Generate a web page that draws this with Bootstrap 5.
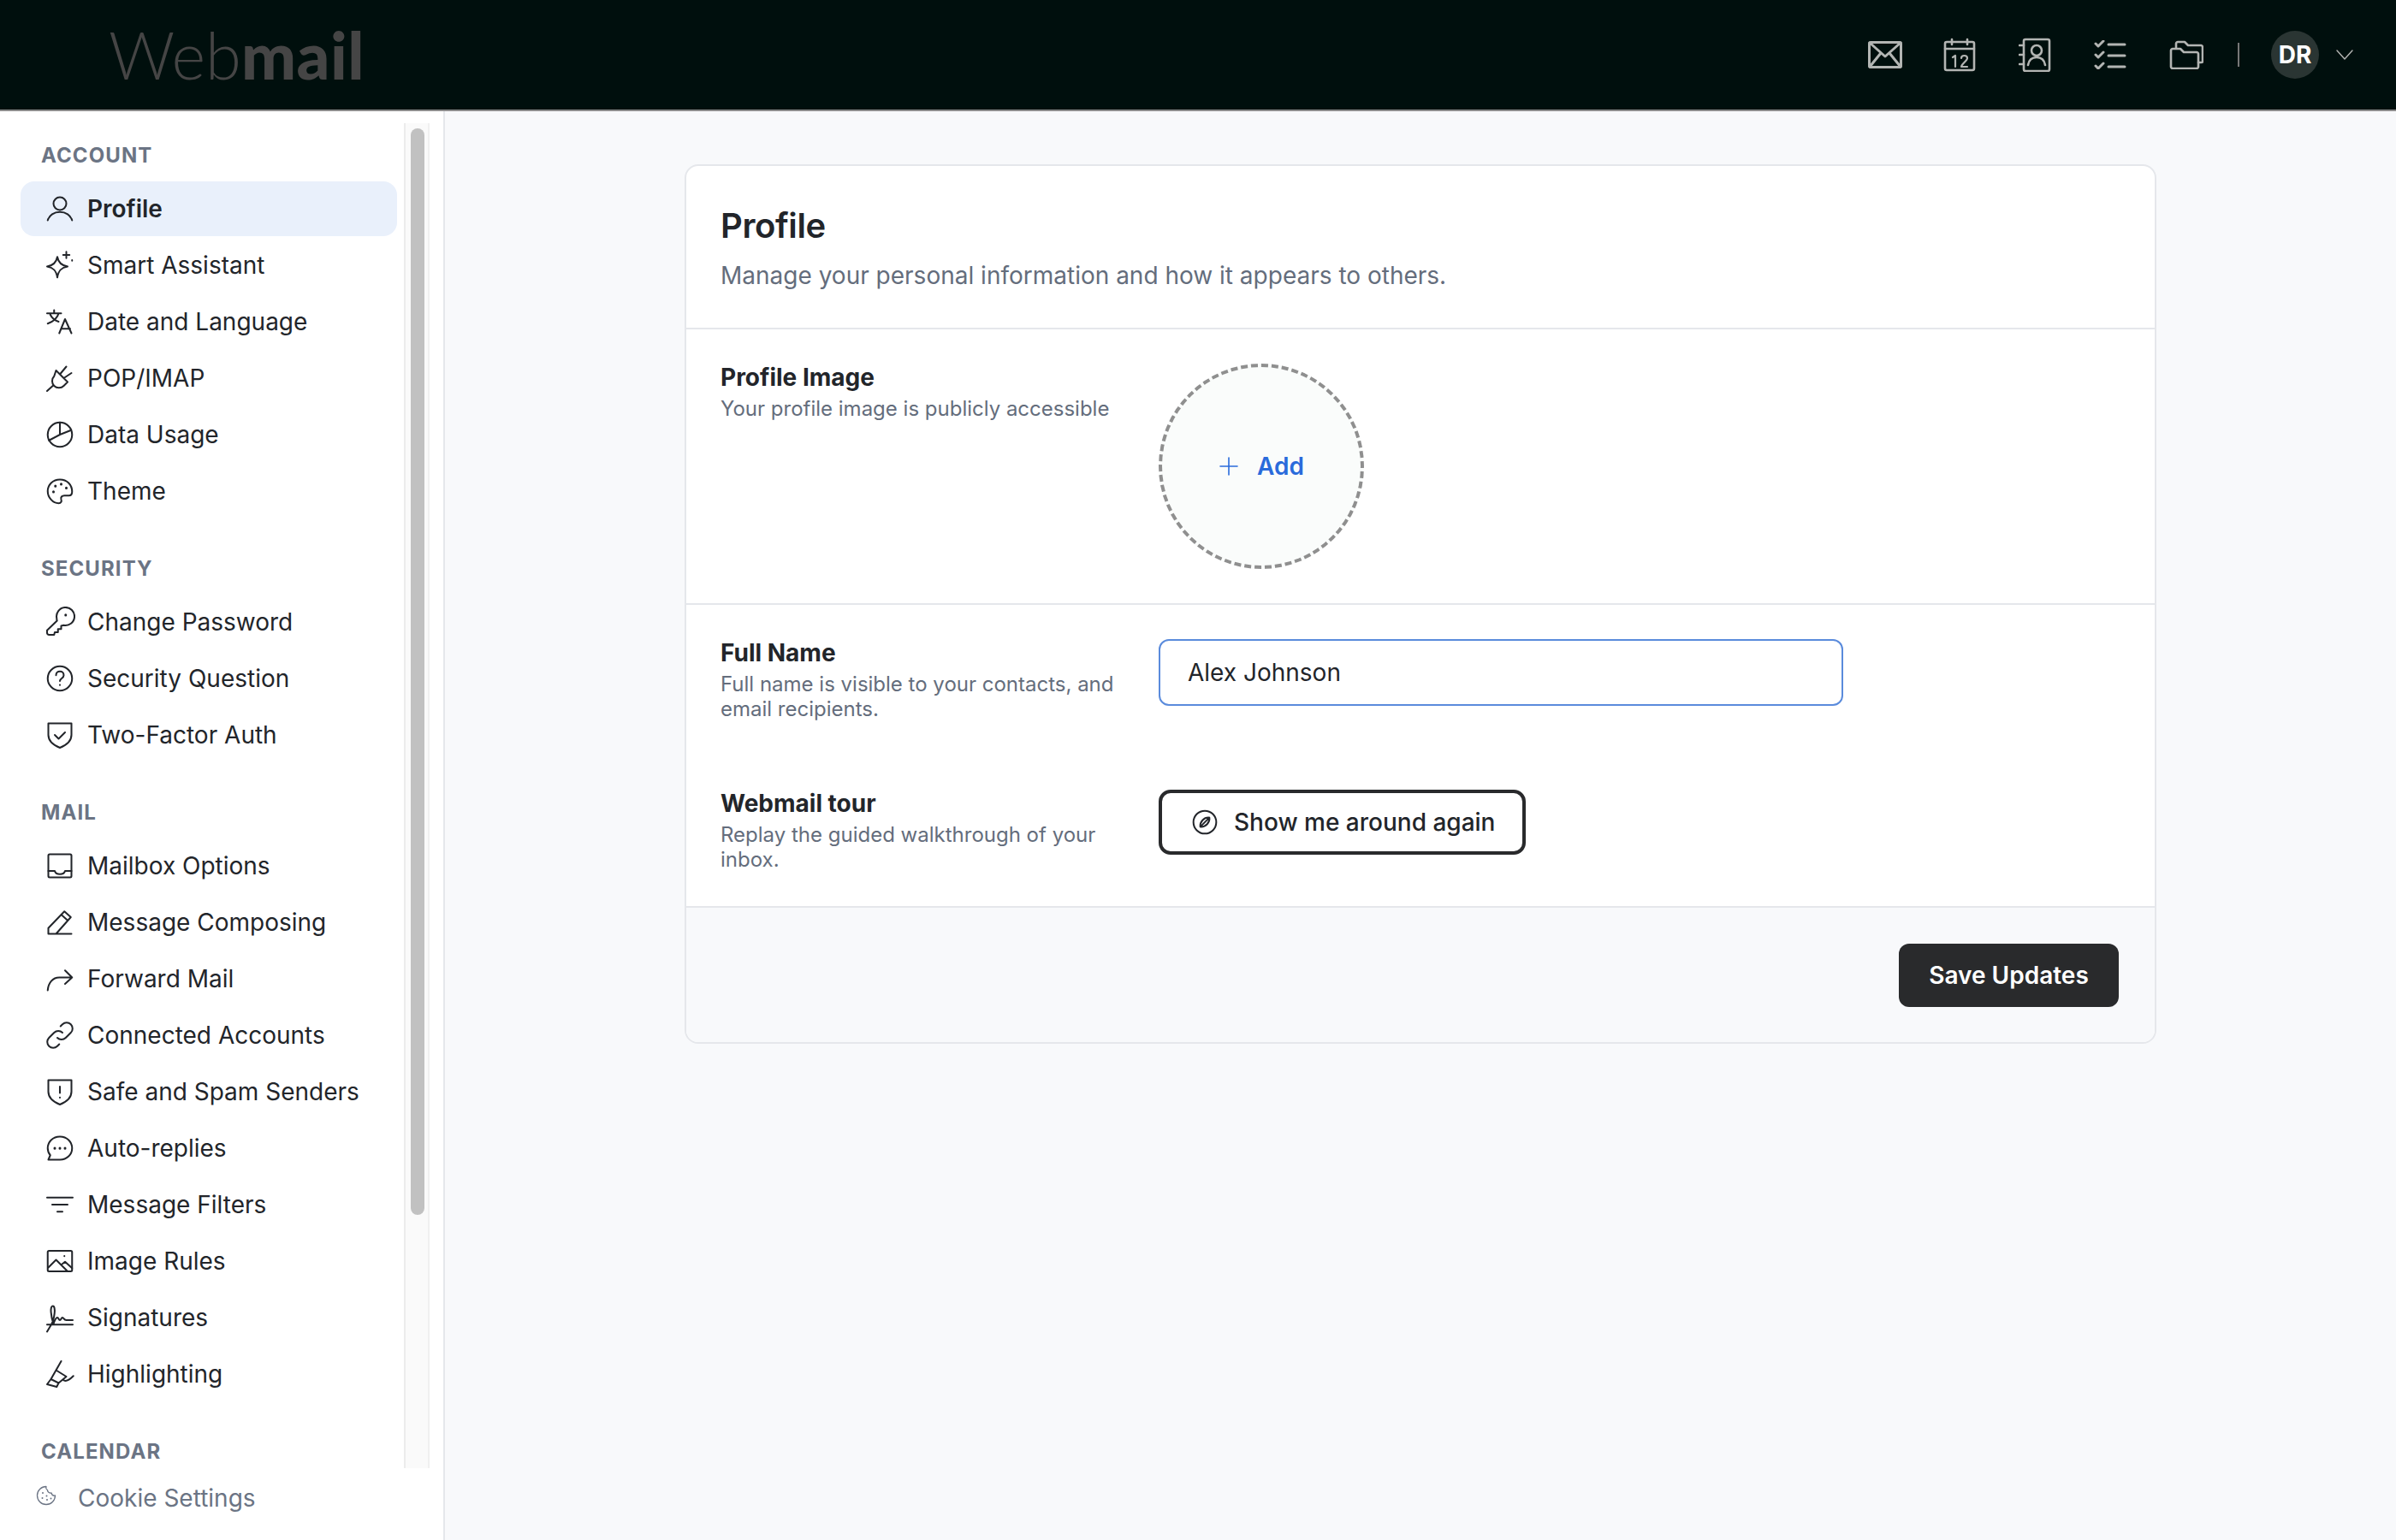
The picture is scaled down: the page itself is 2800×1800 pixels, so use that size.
<!DOCTYPE html>
<html lang="en">
<head>
    <meta charset="UTF-8">
    <title>Webmail - Profile</title>
    <link href="https://cdn.jsdelivr.net/npm/bootstrap@5.3.0/dist/css/bootstrap.min.css" rel="stylesheet">
    <style>
        html, body { height: 100%; margin: 0; overflow: hidden; }
        body { background: #f8f9fb; font-family: Inter, "Liberation Sans", sans-serif; color: #22252a; }
        svg { display: block; flex: none; fill: none; stroke: currentColor; stroke-width: 1.5; stroke-linecap: round; stroke-linejoin: round; }

        .top-bar { height: 130px; background: #000f0d; border-bottom: 2px solid #8b8b8b; padding: 0 50px 0 127px; }
        .logo-text { font-family: Lato, sans-serif; font-size: 76px; line-height: 1; color: #454545; font-weight: 300; }
        .logo-text b { font-weight: 900; letter-spacing: .5px; }
        .top-icons { color: #b3b5b3; }
        .top-icon { margin-right: 50px; }
        .top-icon.mail-ic { margin-right: 48px; margin-left: 2px; }
        .top-sep { width: 2px; height: 28px; background: #777; margin: 0 37px 0 -10px; }
        .avatar-dot { width: 56px; height: 56px; border-radius: 50%; background: #2a3533; color: #fff; font-size: 28px; font-weight: 700; }
        .caret-icon { margin-left: 20px; }

        .page-wrap { height: 1670px; }
        .side-col { width: 520px; background: #fff; border-right: 2px solid #e5e7eb; }
        .side-scroll { height: 1586px; }
        .side-list { width: 472px; padding-top: 36px; overflow: hidden; }
        .side-head { height: 32px; line-height: 32px; margin: 43px 0 14px 48px; font-size: 24px; font-weight: 700; letter-spacing: 1.1px; color: #6b7484; text-transform: uppercase; }
        .side-head.first { margin-top: 0; }
        .side-link { height: 64px; margin: 0 8px 2px 24px; padding-left: 28px; gap: 14px; border-radius: 16px; font-size: 28px; color: #22252a; text-decoration: none; }
        .side-link svg { width: 36px; height: 36px; stroke-width: 1.35; }
        .side-link.active { background: #e9f0fb; font-weight: 600; }
        .track-box { width: 30px; margin-top: 14px; background: #fafafa; border-left: 2px solid #ececec; border-right: 2px solid #f0f0f0; padding: 6px 4px 0 6px; }
        .thumb-box { height: 1270px; background: #c1c1c1; border-radius: 8px; }
        .cookie-row { height: 84px; padding: 0 0 14px 42px; color: #6b7484; font-size: 28px; }
        .cookie-row svg { margin: -6px 25px 0 0; }

        .main-col { padding: 62px 0 0; }
        .profile-card { width: 1720px; height: 1028px; margin: 0 auto; border: 2px solid #e5e7eb; border-radius: 16px; overflow: hidden; background: #fff; }
        .card-top { height: 191px; padding: 46px 40px 0; border-bottom: 2px solid #e5e7eb; }
        .card-top h1 { font-size: 40px; line-height: 48px; font-weight: 600; letter-spacing: -.4px; margin: 0 0 14px; color: #22252a; }
        .card-top p { font-size: 28px; line-height: 40px; margin: 0; color: #646d7c; }
        .block-sec { padding: 40px; border-bottom: 2px solid #e5e7eb; }
        .pic-sec { height: 322px; }
        .form-line { display: flex; gap: 32px; }
        .form-line + .form-line { margin-top: 80px; }
        .label-col { width: 480px; flex: none; }
        .label-col h2 { font-size: 28px; line-height: 32px; font-weight: 700; margin: 0 0 6px; color: #22252a; }
        .label-col p { font-size: 24px; line-height: 29px; margin: 0; color: #646d7c; }
        .add-circle { width: 240px; height: 240px; border: 4px dashed #8f8f8f; border-radius: 50%; background: #fafcfb; color: #2a6bdb; gap: 21px; font-size: 28px; font-weight: 600; }
        .name-input.form-control { width: 800px; height: 78px; border: 2px solid #5a8bdc; border-radius: 12px; font-size: 28px; padding: 0 32px; color: #22252a; box-shadow: none; }
        .tour-btn.btn { height: 76px; border: 4px solid #292a2c; border-radius: 14px; padding: 0 32px 0 34px; gap: 18px; background: #fff; color: #22252a; font-size: 28px; font-weight: 500; }
        .card-end { height: 157px; background: #f8f9fb; padding-right: 42px; }
        .save-btn.btn { height: 74px; width: 257px; background: #292a2c; color: #fff; border: 0; border-radius: 12px; font-size: 28px; font-weight: 600; }
    </style>
</head>
<body>
    <div class="top-bar d-flex align-items-center justify-content-between">
        <div class="logo-text">Web<b>mail</b></div>
        <div class="top-icons d-flex align-items-center">
            <svg class="top-icon mail-ic" width="40" height="32" viewBox="0 0 40 32" style="stroke-width:3"><rect x="1.5" y="1.5" width="37" height="29" rx="1.5"/><path d="M2 2l18 16L38 2M2 30l13-16M38 30L25 14"/></svg>
            <svg class="top-icon" width="38" height="40" viewBox="0 0 38 40" style="stroke-width:2.6"><rect x="2" y="5" width="34" height="33" rx="2"/><path d="M2 13h34M10 2v6M28 2v6"/><path d="M11 23l3-2v13M21 24c0-4 7-4 7 0 0 3-7 7-7 10h7" stroke-width="2.2"/></svg>
            <svg class="top-icon" width="38" height="40" viewBox="0 0 38 40" style="stroke-width:2.6"><rect x="6" y="2" width="30" height="37" rx="2"/><circle cx="21" cy="15" r="6"/><path d="M11 32c1-6 5-9 10-9s9 3 10 9M1 9h5M1 20h5M1 31h5"/></svg>
            <svg class="top-icon" width="38" height="34" viewBox="0 0 38 34" style="stroke-width:3"><path d="M2 4l3 3 6-6M2 17l3 3 6-6M2 30l3 3 6-6M17 5h19M17 18h19M17 31h19"/></svg>
            <svg class="top-icon" width="40" height="34" viewBox="0 0 40 34" style="stroke-width:2.6"><path d="M2 12c0-1 1-2 2-2h9l4 4h15c1 0 2 1 2 2v15c0 1-1 2-2 2H4c-1 0-2-1-2-2z"/><path d="M8 9V4c0-1 1-2 2-2h8l4 4h15c1 0 2 1 2 2v17c0 1-1 1-2 1h-3"/></svg>
            <div class="top-sep"></div>
            <div class="avatar-dot d-flex align-items-center justify-content-center">DR</div>
            <svg class="caret-icon" width="20" height="12" viewBox="0 0 20 12" style="stroke-width:1.4"><path d="M1 1l9 10 9-10"/></svg>
        </div>
    </div>

    <div class="page-wrap d-flex">
        <aside class="side-col d-flex flex-column flex-shrink-0">
            <div class="side-scroll d-flex">
                <nav class="side-list flex-shrink-0">
                    <div class="side-head first">Account</div>
                    <a class="side-link active d-flex align-items-center" href="#"><svg viewBox="0 0 24 24"><circle cx="12" cy="8" r="5"/><path d="M2.5 21c1.2-4 5-6.500 9.500-6.500s8.300 2.500 9.500 6.500"/></svg>Profile</a>
                    <a class="side-link d-flex align-items-center" href="#"><svg viewBox="0 0 24 24"><path d="M10 5.500c.8 4.500 3 6.700 8 7.500-5 .8-7.200 3.200-8 8.500-.8-5.300-3-7.700-8-8.500 5-.8 7.200-3 8-7.500z"/><path d="M17 1.500v5M14.500 4h5M21.500 8v.5" stroke-width="1.3"/></svg>Smart Assistant</a>
                    <a class="side-link d-flex align-items-center" href="#"><svg viewBox="0 0 24 24"><path d="M2 5.500h11M7.500 3v2.500M11 5.500c-1 4-4.500 6.500-8.500 8M4.500 6.500c1.200 2.500 3.500 4.500 6.500 5.500M11.500 21l4.500-11 5 11M13 17.500h7"/></svg>Date and Language</a>
                    <a class="side-link d-flex align-items-center" href="#"><svg viewBox="0 0 24 24"><path d="M2 22l5-4.500M9 6l9 9-3 3c-2 2-5.500 2-7.500 0s-2-5.500 0-7.500zM12 9l5-6M15 12l6-4"/></svg>POP/IMAP</a>
                    <a class="side-link d-flex align-items-center" href="#"><svg viewBox="0 0 24 24"><circle cx="12" cy="12" r="9.500"/><path d="M12 2.500V12l-8.500 4.500M12 12l8.800-3.500"/></svg>Data Usage</a>
                    <a class="side-link d-flex align-items-center" href="#"><svg viewBox="0 0 24 24"><path d="M12 3C6.500 3 2.500 7 2.500 12s4 9.500 8.500 9.500c2 0 2.500-1.500 2-3-.5-1.800.5-3 2.500-3H19c1.700 0 2.500-1.300 2.500-3C21.500 7 17.500 3 12 3z"/><path d="M7 12.500v.1M8.500 8v.1M13 6.500v.1M17 9.500v.1" stroke-width="2"/></svg>Theme</a>

                    <div class="side-head">Security</div>
                    <a class="side-link d-flex align-items-center" href="#"><svg viewBox="0 0 24 24"><path d="M9.500 9a7 7 0 1 1 5.500 5.500l-2 .5v2.500h-2.500V20H8l-.500 2H3.500c-.8 0-1.500-.7-1.500-1.500v-2L9.800 11c-.3-.6-.3-1.300-.3-2z"/><path d="M16.500 6.500v.1" stroke-width="2"/></svg>Change Password</a>
                    <a class="side-link d-flex align-items-center" href="#"><svg viewBox="0 0 24 24"><circle cx="12" cy="12" r="9.500"/><path d="M9 9.500c0-4 6-4 6 0 0 2.500-3 2.500-3 4.500M12 17v.1"/></svg>Security Question</a>
                    <a class="side-link d-flex align-items-center" href="#"><svg viewBox="0 0 24 24"><path d="M3 3h18v9c0 5-4 8-9 10-5-2-9-5-9-10z"/><path d="M8 12l3 3 5-5"/></svg>Two-Factor Auth</a>

                    <div class="side-head">Mail</div>
                    <a class="side-link d-flex align-items-center" href="#"><svg viewBox="0 0 24 24"><rect x="3" y="3" width="18" height="18" rx="1"/><path d="M3 16h5c.5 2 2 2.500 4 2.500s3.500-.5 4-2.500h5"/></svg>Mailbox Options</a>
                    <a class="side-link d-flex align-items-center" href="#"><svg viewBox="0 0 24 24"><path d="M3 21v-4.500L15.500 3.500l5 4.500L9 21zM13 6l5 4.500M3 21h18"/></svg>Message Composing</a>
                    <a class="side-link d-flex align-items-center" href="#"><svg viewBox="0 0 24 24"><path d="M2.500 21c.5-6 4-10 9-10h10M16 5.500l5.500 5.500-5.500 5"/></svg>Forward Mail</a>
                    <a class="side-link d-flex align-items-center" href="#"><svg viewBox="0 0 24 24"><path d="M10 14a4.500 4.500 0 0 0 6.500 0l4-4a4.500 4.500 0 0 0-6.500-6.500l-1.500 1.500M14 10a4.500 4.500 0 0 0-6.500 0l-4 4a4.500 4.500 0 0 0 6.500 6.500l1.500-1.500"/></svg>Connected Accounts</a>
                    <a class="side-link d-flex align-items-center" href="#"><svg viewBox="0 0 24 24"><path d="M3 3h18v9c0 5-4 8-9 10-5-2-9-5-9-10z"/><path d="M12 8v5M12 16.500v.1"/></svg>Safe and Spam Senders</a>
                    <a class="side-link d-flex align-items-center" href="#"><svg viewBox="0 0 24 24"><path d="M12 3c5.500 0 9.500 4 9.500 9s-4 9-9.500 9H3l1.500-3.500C3.200 16 2.500 14 2.500 12 2.500 7 6.500 3 12 3z"/><path d="M8 12v.1M12 12v.1M16 12v.1" stroke-width="2"/></svg>Auto-replies</a>
                    <a class="side-link d-flex align-items-center" href="#"><svg viewBox="0 0 24 24"><path d="M2 6.500h20M6 12h12M10 17.500h4"/></svg>Message Filters</a>
                    <a class="side-link d-flex align-items-center" href="#"><svg viewBox="0 0 24 24"><rect x="2.500" y="4" width="19" height="16" rx="1"/><path d="M3 17l6-6 9 9M13 15l3-2.500 5.500 5M15.500 8v.1"/></svg>Image Rules</a>
                    <a class="side-link d-flex align-items-center" href="#"><svg viewBox="0 0 24 24"><path d="M2 17.500h20M2 23l3-5c3-5 4-15 1.500-15C4 3 5 11 7 17c1-3 2-5 3-5s1 2 2 2 1-2 2-2 1 2 3 2h5"/></svg>Signatures</a>
                    <a class="side-link d-flex align-items-center" href="#"><svg viewBox="0 0 24 24"><path d="M2 20l3-4 6 3-1.500 3zM5 16l4-7 8 5-6 5M9 9l4-7M14.500 16.500c2 2 5 0 8-3"/></svg>Highlighting</a>

                    <div class="side-head">Calendar</div>
                </nav>
                <div class="track-box flex-shrink-0"><div class="thumb-box"></div></div>
            </div>
            <div class="cookie-row d-flex align-items-center">
                <svg width="24" height="24" viewBox="0 0 24 24" style="stroke-width:1.3"><path d="M12 1.500a10.500 10.500 0 1 0 10.500 10.500c-2.500.5-4-.5-4.500-3-2.500.3-4.500-1-4.500-3.500-1.500-.5-2-2.500-1.500-4z"/><path d="M8 9v.1M7.500 15v.1M12.500 12.500v.1M13 17v.1M17.500 15.500v.1" stroke-width="2"/></svg>
                Cookie Settings
            </div>
        </aside>

        <main class="main-col flex-grow-1">
            <div class="profile-card d-flex flex-column">
                <div class="card-top">
                    <h1>Profile</h1>
                    <p>Manage your personal information and how it appears to others.</p>
                </div>
                <div class="block-sec pic-sec form-line">
                    <div class="label-col">
                        <h2>Profile Image</h2>
                        <p>Your profile image is publicly accessible</p>
                    </div>
                    <div class="add-circle d-flex align-items-center justify-content-center">
                        <svg width="24" height="24" viewBox="0 0 24 24" style="stroke-width:1.6"><path d="M12 2v20M2 12h20"/></svg>
                        Add
                    </div>
                </div>
                <div class="block-sec">
                    <div class="form-line">
                        <div class="label-col">
                            <h2>Full Name</h2>
                            <p>Full name is visible to your contacts, and email recipients.</p>
                        </div>
                        <div><input class="form-control name-input" type="text" value="Alex Johnson"></div>
                    </div>
                    <div class="form-line">
                        <div class="label-col">
                            <h2>Webmail tour</h2>
                            <p>Replay the guided walkthrough of your inbox.</p>
                        </div>
                        <div>
                            <button class="btn tour-btn d-flex align-items-center" type="button">
                                <svg width="32" height="32" viewBox="0 0 24 24"><circle cx="12" cy="12" r="10"/><path d="M8 16c-.5-4 3-8.500 8-8 .5 4-3 8.500-8 8zM8 16l8-8"/></svg>
                                Show me around again
                            </button>
                        </div>
                    </div>
                </div>
                <div class="card-end d-flex align-items-center justify-content-end">
                    <button class="btn save-btn" type="button">Save Updates</button>
                </div>
            </div>
        </main>
    </div>

    <script src="https://cdn.jsdelivr.net/npm/bootstrap@5.3.0/dist/js/bootstrap.bundle.min.js"></script>
</body>
</html>
